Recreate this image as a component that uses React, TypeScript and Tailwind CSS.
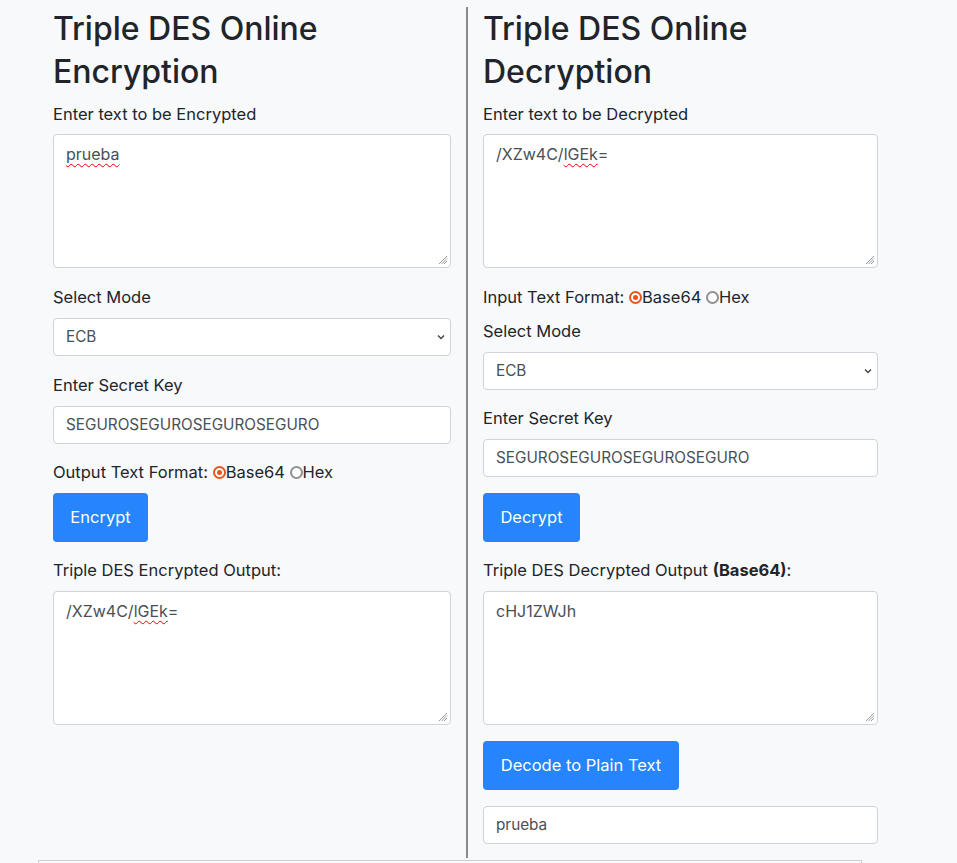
import React from "react";

const Grip = () => (
  <svg className="absolute right-[2px] bottom-[2px]" width="10" height="10" viewBox="0 0 10 10">
    <line x1="9" y1="1" x2="1" y2="9" stroke="#9a9a9a" strokeWidth="1" />
    <line x1="9" y1="3.5" x2="3.5" y2="9" stroke="#9a9a9a" strokeWidth="1" />
    <line x1="9" y1="6" x2="6" y2="9" stroke="#9a9a9a" strokeWidth="1" />
  </svg>
);

const Squiggle = ({ children }: { children: React.ReactNode }) => (
  <span className="underline decoration-wavy decoration-[#e00] decoration-1 underline-offset-[3px]">{children}</span>
);

const TextBox = ({ children, cls = "" }: { children?: React.ReactNode; cls?: string }) => (
  <div className={`relative h-[134px] bg-white border border-[#ced4da] rounded-[4px] px-[12px] py-[7px] text-[#495057] text-[16px] leading-[24px] ${cls}`}>
    {children}
    <Grip />
  </div>
);

const Input = ({ value, cls = "" }: { value: string; cls?: string }) => (
  <div className={`h-[38px] bg-white border border-[#ced4da] rounded-[4px] px-[12px] flex items-center text-[#495057] text-[15.3px] ${cls}`}>
    {value}
  </div>
);

const Select = ({ cls = "" }: { cls?: string }) => (
  <div className={`h-[38px] bg-white border border-[#ced4da] rounded-[4px] pl-[12px] pr-[4px] flex items-center justify-between text-[#495057] text-[15.3px] ${cls}`}>
    <span>ECB</span>
    <svg width="10" height="10" viewBox="0 0 10 10">
      <path d="M2 3.5 L5 6.5 L8 3.5" fill="none" stroke="#444" strokeWidth="1.4" />
    </svg>
  </div>
);

const Radio = ({ checked }: { checked?: boolean }) =>
  checked ? (
    <span className="inline-flex w-[13px] h-[13px] rounded-full border-[2px] border-[#e9541e] items-center justify-center align-middle bg-white mt-[-3px]">
      <span className="w-[5px] h-[5px] rounded-full bg-[#e9541e]" />
    </span>
  ) : (
    <span className="inline-block w-[13px] h-[13px] rounded-full border-[2px] border-[#8f8f94] align-middle bg-white mt-[-3px]" />
  );

const Label = ({ children, cls = "" }: { children: React.ReactNode; cls?: string }) => (
  <div className={`h-[24px] leading-[24px] text-[16.5px] text-[#212529] whitespace-nowrap ${cls}`}>{children}</div>
);

const Button = ({ children, cls = "" }: { children: React.ReactNode; cls?: string }) => (
  <div className={`h-[49px] bg-[#2684fc] rounded-[4px] text-white text-[16.5px] flex items-center justify-center ${cls}`}>
    {children}
  </div>
);

export default function App() {
  return (
    <div className="min-h-screen bg-[#f8f9fa] font-['Inter',sans-serif] pl-[38px]">
      <div className="flex w-[900px]">
        <div className="w-[428px] pl-[15px] pr-[15px]">
          <h2 className="text-[32px] leading-[43px] font-medium text-[#212529] mt-[7px] w-[398px]">
            Triple DES Online Encryption
          </h2>
          <Label cls="mt-[9px]">Enter text to be Encrypted</Label>
          <TextBox cls="mt-[8px]">
            <Squiggle>prueba</Squiggle>
          </TextBox>
          <Label cls="mt-[17px]">Select Mode</Label>
          <Select cls="mt-[9px]" />
          <Label cls="mt-[17px]">Enter Secret Key</Label>
          <Input value="SEGUROSEGUROSEGUROSEGURO" cls="mt-[9px]" />
          <Label cls="mt-[16px]">
            Output Text Format: <Radio checked />Base64 <Radio />Hex
          </Label>
          <Button cls="mt-[9px] w-[95px]">Encrypt</Button>
          <Label cls="mt-[16px]">Triple DES Encrypted Output:</Label>
          <TextBox cls="mt-[9px]">
            /XZw4C/<Squiggle>lGEk</Squiggle>=
          </TextBox>
        </div>
        <div className="w-[2px] bg-[#8a8a8a] mt-[7px]" />
        <div className="w-[410px] pl-[15px] pb-[14px]">
          <h2 className="text-[32px] leading-[43px] font-medium text-[#212529] mt-[7px] w-[395px]">
            Triple DES Online Decryption
          </h2>
          <Label cls="mt-[9px]">Enter text to be Decrypted</Label>
          <TextBox cls="mt-[8px] w-[395px]">
            /XZw4C/<Squiggle>lGEk</Squiggle>=
          </TextBox>
          <Label cls="mt-[17px]">
            Input Text Format: <Radio checked />Base64 <Radio />Hex
          </Label>
          <Label cls="mt-[10px]">Select Mode</Label>
          <Select cls="mt-[9px] w-[395px]" />
          <Label cls="mt-[16px]">Enter Secret Key</Label>
          <Input value="SEGUROSEGUROSEGUROSEGURO" cls="mt-[9px] w-[395px]" />
          <Button cls="mt-[16px] w-[97px]">Decrypt</Button>
          <Label cls="mt-[16px]">
            Triple DES Decrypted Output <b className="font-bold">(Base64)</b>:
          </Label>
          <TextBox cls="mt-[9px] w-[395px]">cHJ1ZWJh</TextBox>
          <Button cls="mt-[16px] w-[196px]">Decode to Plain Text</Button>
          <Input value="prueba" cls="mt-[16px] w-[395px]" />
        </div>
      </div>
      <div className="mt-[2px] w-[824px] h-[40px] border border-[#cfcfcf] bg-[#f8f9fa]" />
    </div>
  );
}
